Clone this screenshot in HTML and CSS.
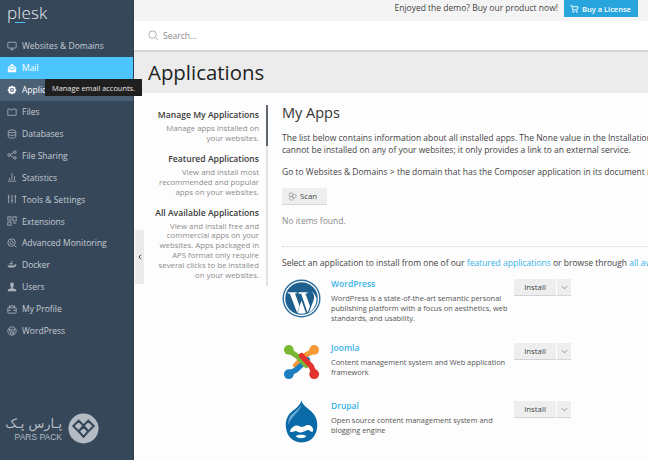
FILE: index.html
```html
<!DOCTYPE html>
<html lang="en">
<head>
<meta charset="utf-8">
<title>Plesk Applications</title>
<link rel="stylesheet" href="styles.css">
</head>
<body>
<div class="app">
  <aside class="sidebar">
    <div class="logo"><span>p</span><span class="logo-l">l<i class="logo-bar"></i></span><span>esk</span></div>
    <nav class="nav">
      <a class="nav-item"><svg class="ico" viewBox="0 0 12 12"><rect x="1" y="1.500" width="10" height="7" rx="1"/><path d="M4 10.500h4M6 8.500v2"/></svg>Websites &amp; Domains</a>
      <a class="nav-item active"><svg class="ico solid" viewBox="0 0 12 12"><path class="fill" d="M1 5 6 1l5 4v5.500a.5.5 0 0 1-.5.5h-9a.5.5 0 0 1-.5-.5z"/><path class="cut" d="M3 4.500h6M1.500 6 6 8.500 10.500 6"/></svg>Mail</a>
      <a class="nav-item hover"><svg class="ico bright" viewBox="0 0 12 12"><circle cx="6" cy="6" r="3.400" stroke-width="2"/><circle cx="6" cy="6" r="1"/><path stroke-width="1.500" d="M6 .8v1.500M6 9.700v1.500M.8 6h1.500M9.700 6h1.500M2.300 2.300l1 1M8.700 8.700l1 1M2.300 9.700l1-1M8.700 3.300l1-1"/></svg>Applications</a>
      <a class="nav-item"><svg class="ico" viewBox="0 0 12 12"><path d="M1 2.500h3l1 1.500h.5l1-1.500h4.500v7.500H1z"/></svg>Files</a>
      <a class="nav-item"><svg class="ico" viewBox="0 0 12 12"><ellipse cx="6" cy="2.800" rx="4.500" ry="1.700"/><path d="M1.500 2.800v6.400c0 1 2 1.700 4.500 1.700s4.500-.7 4.500-1.700V2.800M1.500 6c0 1 2 1.700 4.500 1.700S10.500 7 10.500 6"/></svg>Databases</a>
      <a class="nav-item"><svg class="ico" viewBox="0 0 12 12"><circle cx="2.500" cy="6" r="1.500"/><circle cx="9.500" cy="2.500" r="1.500"/><circle cx="9.500" cy="9.500" r="1.500"/><path d="M3.900 5.300 8.100 3.200M3.900 6.700l4.200 2.100"/></svg>File Sharing</a>
      <a class="nav-item"><svg class="ico" viewBox="0 0 12 12"><path d="M1 11h10M3 9.500V7M6 9.500V1.500M9 9.500V5"/></svg>Statistics</a>
      <a class="nav-item"><svg class="ico" viewBox="0 0 12 12"><path d="M2 1v10M6 1v10M10 1v10M.8 4h2.400M4.800 7.500h2.400M8.800 3.500h2.400"/></svg>Tools &amp; Settings</a>
      <a class="nav-item"><svg class="ico" viewBox="0 0 12 12"><rect x="1" y="1" width="3.800" height="3.800"/><rect x="7.200" y="1" width="3.800" height="5"/><rect x="1" y="7.200" width="3.800" height="3.800"/><path d="M7.200 8.500h3.800"/></svg>Extensions</a>
      <a class="nav-item"><svg class="ico" viewBox="0 0 12 12"><circle cx="5.500" cy="5.500" r="4.500"/><circle cx="5.500" cy="5.500" r="2"/><path d="m9 9 2.300 2.300"/></svg>Advanced Monitoring</a>
      <a class="nav-item"><svg class="ico solid" viewBox="0 0 12 12"><path class="fill" d="M.5 6.500h8c.6 0 .9-1 1-1.500l2 .5c-.6 2.500-2.500 3.500-4.500 3.500H4C2 9 .8 8 .5 6.500z"/><path class="fill" d="M3 3.500h1.500v2H3zM5 3.500h1.500v2H5zM5 1.500h1.500v1.500H5z"/></svg>Docker</a>
      <a class="nav-item"><svg class="ico solid" viewBox="0 0 12 12"><path class="fill" d="M4 .8h4v4.400L7 6.500v1l4 1.500v2.200H1V9l4-1.500v-1L4 5.200z"/></svg>Users</a>
      <a class="nav-item"><svg class="ico" viewBox="0 0 12 12"><path d="M1 4.500h10V10a1 1 0 0 1-1 1H2a1 1 0 0 1-1-1zM3 4.500V2l1.500 1L6 1.200 7.500 3 9 2v2.500M1 7.500h3.500M7.500 7.500H11"/></svg>My Profile</a>
      <a class="nav-item"><svg class="ico" viewBox="0 0 12 12"><circle cx="6" cy="6" r="5"/><path d="M2.800 4 5 10M5 4l2.300 6L9.200 4M2.200 4h3.500M6.700 4h3"/></svg>WordPress</a>
    </nav>
    <div class="brand">
      <div class="brand-text">
        <span class="brand-fa">پـارس پـک</span>
        <span class="brand-en">PARS PACK</span>
      </div>
      <svg class="brand-mark" viewBox="0 0 32 32"><circle cx="16" cy="16" r="15.500" fill="#b4bbc3"/><path d="M16 13 11 8 5.500 13.500l5.500 5.500zM16 13l5-5 5.500 5.500-5.500 5.500zM11 19l5-5 5 5-5 5.500z" fill="none" stroke="#37475a" stroke-width="2.200"/></svg>
    </div>
  </aside>

  <main class="main">
    <div class="topbar">
      <span class="promo">Enjoyed the demo? Buy our product now!</span>
      <a class="buy"><svg class="cart" viewBox="0 0 10 10"><path d="M.5 1.500h1.500l1 5h5l1-3.500H2.500"/><circle cx="3.500" cy="8.500" r=".7"/><circle cx="7.500" cy="8.500" r=".7"/></svg>Buy a License</a>
    </div>
    <div class="search">
      <svg class="search-ico" viewBox="0 0 12 12"><circle cx="5" cy="5" r="4"/><path d="m8 8 3 3"/></svg>
      <span>Search...</span>
    </div>
    <header class="title-band"><h1>Applications</h1></header>
    <div class="content">
      <div class="side-wrap">
        <ul class="tabs">
          <li class="tab"><h3>Manage My Applications</h3><p>Manage apps installed on your websites.</p></li>
          <li class="tab"><h3>Featured Applications</h3><p>View and install most recommended and popular apps on your websites.</p></li>
          <li class="tab"><h3>All Available Applications</h3><p>View and install free and commercial apps on your websites. Apps packaged in APS format only require several clicks to be installed on your websites.</p></li>
        </ul>
        <div class="rail"><i class="rail-on"></i></div>
      </div>
      <section class="panel">
        <h2>My Apps</h2>
        <p class="line first">The list below contains information about all installed apps. The None value in the Installation column means that the app</p>
        <p class="line">cannot be installed on any of your websites; it only provides a link to an external service.</p>
        <p class="line go">Go to Websites &amp; Domains &gt; the domain that has the Composer application in its document root and open the app</p>
        <button class="scan"><svg class="scan-ico" viewBox="0 0 12 12"><circle cx="4" cy="3.500" r="2.500"/><circle cx="8.500" cy="5.500" r="2.500"/><circle cx="4.500" cy="8.500" r="2.500"/></svg>Scan</button>
        <p class="none">No items found.</p>
        <hr class="sep">
        <p class="line select">Select an application to install from one of our <a>featured applications</a> or browse through <a>all available applications</a>.</p>

        <div class="app-row wp">
          <svg class="app-logo" viewBox="0 0 40 40"><circle cx="20" cy="20" r="19.500" fill="#2a6d9c"/><circle cx="20" cy="20" r="17.400" fill="none" stroke="#fff" stroke-width="1.300"/><circle cx="20" cy="20" r="15.800" fill="#1f5f8d"/><path d="M6 13.500h9v1.300h-1.700l4.700 13-2.500 6.700L8 14.800H6zM17 13.500h9v1.300h-2l4.700 13.200-2.500 6.500-6.500-19.500H17zM30.500 12.500c2.500 2.500 3 6 2 9l-5 13c5-3 8-8 8-14.500-1-3-3-6-5-7.500zM20 22l4.500 12.800c-3 1-5.500 1-8.500 0z" fill="#fff"/></svg>
          <div class="app-info"><h4>WordPress</h4><p>WordPress is a state-of-the-art semantic personal publishing platform with a focus on aesthetics, web standards, and usability.</p></div>
          <div class="split"><button class="install">Install</button><button class="caret"><svg viewBox="0 0 8 5"><path d="m1 1 3 3 3-3"/></svg></button></div>
        </div>
        <div class="app-row jm">
          <svg class="app-logo" viewBox="0 0 40 40" fill="none" stroke-linecap="round" stroke-linejoin="round" stroke-width="5.500"><path d="M33 8 25 12 14 23" stroke="#f59a37"/><circle cx="33" cy="7" r="5" fill="#f59a37" stroke="none"/><path d="M7 31l7-3 12-11" stroke="#1b7ec1"/><circle cx="7" cy="32" r="5" fill="#1b7ec1" stroke="none"/><path d="M7 8l8 5 10 10" stroke="#7ab733"/><circle cx="7" cy="7" r="5" fill="#7ab733" stroke="none"/><path d="M33 31l-3-7-10-11" stroke="#e2332c"/><circle cx="33" cy="32" r="5" fill="#e2332c" stroke="none"/></svg>
          <div class="app-info"><h4>Joomla</h4><p>Content management system and Web application framework</p></div>
          <div class="split"><button class="install">Install</button><button class="caret"><svg viewBox="0 0 8 5"><path d="m1 1 3 3 3-3"/></svg></button></div>
        </div>
        <div class="app-row dp">
          <svg class="app-logo tall" viewBox="0 0 36 44"><path d="M18 .5c1 6 10 9 14 16 5 9 2 27-14 27S-1 25 4 16.500C8 10 16 8 18 .5z" fill="#0b6aa8"/><path d="M18 4c-1 4-8 8-12 13-1 2-2 6-1.500 8 3-9 13-13 13.500-21z" fill="#6aa9d2"/><path d="M6 32c2-5 7-7 10-5 1 1 3 1 5 0 4-3 8-1 9 3 0 4-2 3-4 1-2-1-5 2-8 2-3 1-5-2-7-1-2 0-3 2-5 0z" fill="#fff"/><path d="M12 37c3-2 8-2 11 0-2 3-9 3-11 0z" fill="#fff"/></svg>
          <div class="app-info"><h4>Drupal</h4><p>Open source content management system and blogging engine</p></div>
          <div class="split"><button class="install">Install</button><button class="caret"><svg viewBox="0 0 8 5"><path d="m1 1 3 3 3-3"/></svg></button></div>
        </div>
      </section>
    </div>
  </main>

  <div class="collapse"><svg viewBox="0 0 4 6"><path d="M3 .8.900 3 3 5.200"/></svg></div>
  <div class="tooltip">Manage email accounts.</div>
</div>
</body>
</html>
```
FILE: styles.css
```css
* { box-sizing: border-box; }
html, body { margin: 0; height: 100%; }
body {
  width: 648px;
  height: 460px;
  overflow: hidden;
  font-family: "Open Sans", "Liberation Sans", sans-serif;
  background: #fff;
  color: #4a4a4a;
}
.app { position: relative; display: flex; width: 648px; height: 460px; overflow: hidden; }

/* sidebar */
.sidebar {
  width: 134px;
  flex: none;
  display: flex;
  flex-direction: column;
  background: #37475a;
  border-right: 1px solid #2f3d4d;
}
.logo {
  height: 35px;
  padding: 1px 0 0 7px;
  font-size: 17px;
  line-height: 24px;
  letter-spacing: .2px;
  font-weight: 300;
  color: #e6ebef;
}
.logo-l { position: relative; }
.logo-bar { position: absolute; left: -2px; right: -4px; top: 21px; height: 1px; background: #4cc3f5; }
.nav { display: flex; flex-direction: column; }
.nav-item {
  display: flex;
  align-items: center;
  gap: 5px;
  height: 21.900px;
  padding-left: 7px;
  font-size: 8.500px;
  color: #c5ccd3;
  white-space: nowrap;
}
.nav-item.active { background: #4bc5fb; color: #fff; }
.nav-item.hover { background: #4b5f75; color: #fff; }
.ico { width: 10px; height: 10px; flex: none; fill: none; stroke: #a9b3bd; stroke-width: 1; }
.ico.bright { stroke: #fff; }
.ico.solid { stroke: none; }
.ico .fill { fill: #a9b3bd; }
.nav-item.active .ico .fill { fill: #fff; }
.ico .cut { fill: none; stroke: #4bc5fb; stroke-width: 1; }
.brand {
  margin-top: auto;
  display: flex;
  align-items: center;
  gap: 6px;
  padding: 0 0 16px 15px;
}
.brand-text { display: flex; flex-direction: column; align-items: flex-end; width: 47px; }
.brand-fa { font-family: "DejaVu Sans", sans-serif; font-size: 13px; line-height: 16px; color: #b4bbc3; white-space: nowrap; }
.brand-en { font-family: "Liberation Sans", sans-serif; font-size: 8.500px; line-height: 9px; margin-top: 1px; color: #b4bbc3; white-space: nowrap; }
.brand-mark { width: 31px; height: 31px; flex: none; }

/* main */
.main { flex: 1; min-width: 0; display: flex; flex-direction: column; background: #fdfdfd; }
.topbar {
  height: 21px;
  flex: none;
  display: flex;
  justify-content: flex-end;
  align-items: flex-start;
  gap: 6px;
  padding-right: 10px;
  background: #f4f4f4;
}
.promo { font-size: 8.500px; line-height: 16px; color: #444; white-space: nowrap; }
.buy {
  display: flex;
  align-items: center;
  gap: 3px;
  width: 74px;
  height: 17px;
  padding-left: 6px;
  background: #27a5dc;
  color: #fff;
  font-size: 7.500px;
  font-weight: 600;
}
.cart { width: 9px; height: 9px; fill: none; stroke: #fff; stroke-width: 1; }
.search {
  height: 31px;
  flex: none;
  display: flex;
  align-items: center;
  gap: 4px;
  padding-left: 14px;
  background: #fff;
  border-bottom: 2px solid #d4d4d4;
  font-size: 8.500px;
  color: #8a8a8a;
}
.search-ico { width: 11px; height: 11px; fill: none; stroke: #aaa; stroke-width: 1; }
.title-band { height: 41px; flex: none; padding-left: 14px; background: #ececec; }
h1 { margin: 0; font-size: 20.400px; line-height: 40px; font-weight: 500; color: #222; }

.content { flex: 1; min-height: 0; display: flex; }
.side-wrap { width: 133px; flex: none; display: flex; padding-top: 12px; align-items: flex-start; }
.tabs { list-style: none; margin: 0; padding: 3px 0 0 17px; width: 125px; flex: none; text-align: right; }
.tab { margin-bottom: 8px; }
.tab h3 { margin: 0; font-size: 8.600px; line-height: 14px; font-weight: 600; color: #3a3a3a; white-space: nowrap; direction: rtl; }
.tab p { margin: 2px 0 0; font-size: 7.800px; line-height: 9.900px; color: #8c8c8c; }
.rail { width: 2px; height: 181px; margin-left: 7px; background: #e4e4e4; flex: none; }
.rail-on { display: block; height: 41px; background: #5f6670; }

.panel { flex: 1; min-width: 0; padding: 0 0 0 15px; overflow: hidden; }
.panel h2 { margin: 0; padding-top: 9px; font-size: 14.500px; line-height: 22px; font-weight: 400; color: #333; }
.line { margin: 0; font-size: 8.500px; line-height: 12px; color: #444; white-space: nowrap; }
.line.first { margin-top: 8px; }
.line.go { margin-top: 10px; }
.line a { color: #37b4e8; }
.scan {
  display: flex;
  align-items: center;
  gap: 3px;
  width: 45px;
  height: 17px;
  margin-top: 10px;
  padding: 0 0 0 6px;
  border: 0;
  border-bottom: 1px solid #d8d8d8;
  background: #eeeeee;
  font: 500 7.800px "Open Sans", sans-serif;
  color: #444;
}
.scan-ico { width: 9px; height: 9px; fill: none; stroke: #999; stroke-width: 1; }
.none { margin: 10px 0 0; font-size: 8.500px; line-height: 12px; color: #8a8a8a; }
.sep { margin: 19px 0 0; border: 0; border-top: 1px dotted #cfcfcf; }
.line.select { margin-top: 10px; }

.app-row { display: flex; align-items: flex-start; }
.app-row.wp { height: 64px; margin-top: 10px; }
.app-row.jm { height: 58px; }
.app-logo { width: 39px; height: 39px; flex: none; }
.app-logo.tall { width: 35px; height: 43px; }
.dp .app-logo { margin: -1px 2px 0 2px; }
.app-info { width: 178px; margin: -1px 0 0 10px; flex: none; }
.app-info h4 { margin: 0; font-size: 8.500px; line-height: 11px; font-weight: 600; color: #37b4e8; }
.app-info p { margin: 4px 0 0; font-size: 7.400px; line-height: 10px; color: #555; }
.split { display: flex; margin-left: 5px; flex: none; }
.install, .caret { height: 17px; border: 0; border-bottom: 1px solid #d4d4d4; background: #eeeeee; padding: 0; }
.install { width: 42px; margin-right: 1px; font: 500 7.800px "Open Sans", sans-serif; color: #444; }
.caret { width: 14px; display: flex; align-items: center; justify-content: center; }
.caret svg { width: 7px; height: 5px; fill: none; stroke: #888; stroke-width: 1; }

/* overlays */
.collapse {
  position: absolute;
  left: 135px;
  top: 230px;
  width: 9px;
  height: 54px;
  display: flex;
  align-items: center;
  justify-content: center;
  background: #ebebeb;
  border-radius: 0 2px 2px 0;
}
.collapse svg { width: 4px; height: 6px; fill: none; stroke: #333; stroke-width: 1; }
.tooltip {
  position: absolute;
  left: 45px;
  top: 79px;
  width: 97px;
  height: 17px;
  display: flex;
  align-items: center;
  justify-content: center;
  background: #1f1f1f;
  color: #e8e8e8;
  font-size: 7.400px;
  white-space: nowrap;
}
```
